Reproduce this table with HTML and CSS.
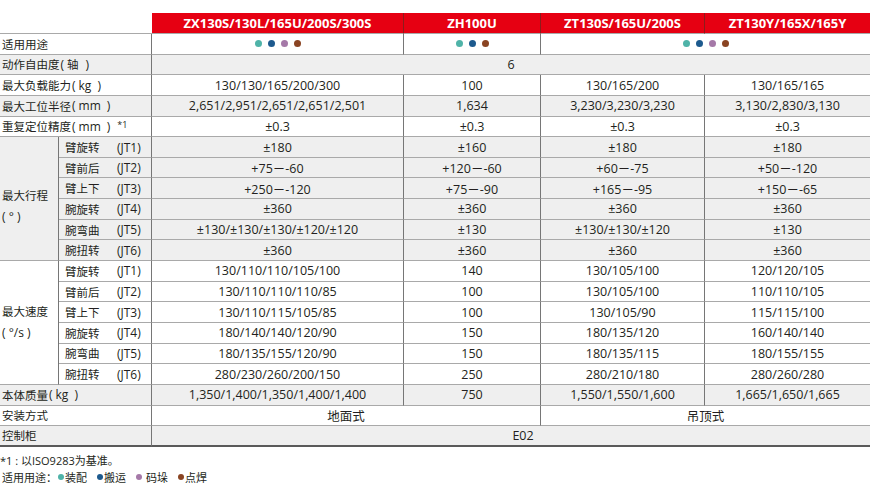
FILE: index.html
```html
<!DOCTYPE html>
<html lang="zh-CN">
<head>
<meta charset="utf-8">
<title>规格</title>
<link rel="stylesheet" href="styles.css">
</head>
<body>
<div class="page">
  <div class="spec">
    <div class="c blank span2"></div>
    <div class="c hd">ZX130S/130L/165U/200S/300S</div>
    <div class="c hd">ZH100U</div>
    <div class="c hd">ZT130S/165U/200S</div>
    <div class="c hd last">ZT130Y/165X/165Y</div>

    <div class="c lbl span2">适用用途</div>
    <div class="c v"><span class="dots"><i class="d1"></i><i class="d2"></i><i class="d3"></i><i class="d4"></i></span></div>
    <div class="c v"><span class="dots"><i class="d1"></i><i class="d2"></i><i class="d4"></i></span></div>
    <div class="c v span2 last"><span class="dots"><i class="d1"></i><i class="d2"></i><i class="d3"></i><i class="d4"></i></span></div>

    <div class="c lbl span2 g">动作自由度<span class="p">(<span class="u cj">轴</span>)</span></div>
    <div class="c v span4 last g">6</div>

    <div class="c lbl span2">最大负载能力<span class="p">(<span class="u">kg</span>)</span></div>
    <div class="c v">130/130/165/200/300</div>
    <div class="c v">100</div>
    <div class="c v">130/165/200</div>
    <div class="c v last">130/165/165</div>

    <div class="c lbl span2 g">最大工位半径<span class="p">(<span class="u">mm</span>)</span></div>
    <div class="c v g">2,651/2,951/2,651/2,651/2,501</div>
    <div class="c v g">1,634</div>
    <div class="c v g">3,230/3,230/3,230</div>
    <div class="c v last g">3,130/2,830/3,130</div>

    <div class="c lbl span2">重复定位精度<span class="p">(<span class="u">mm</span>)</span><sup>*1</sup></div>
    <div class="c v">±0.3</div>
    <div class="c v">±0.3</div>
    <div class="c v">±0.3</div>
    <div class="c v last">±0.3</div>

    <div class="c lbl grp travel g"><span>最大行程<br><span class="q">( ° )</span></span></div>
    <div class="c sub g"><span class="nm">臂旋转</span><span class="jt">(JT1)</span></div>
    <div class="c v g">±180</div>
    <div class="c v g">±160</div>
    <div class="c v g">±180</div>
    <div class="c v last g">±180</div>

    <div class="c sub g"><span class="nm">臂前后</span><span class="jt">(JT2)</span></div>
    <div class="c v g">+75－-60</div>
    <div class="c v g">+120－-60</div>
    <div class="c v g">+60－-75</div>
    <div class="c v last g">+50－-120</div>

    <div class="c sub g"><span class="nm">臂上下</span><span class="jt">(JT3)</span></div>
    <div class="c v g">+250－-120</div>
    <div class="c v g">+75－-90</div>
    <div class="c v g">+165－-95</div>
    <div class="c v last g">+150－-65</div>

    <div class="c sub g"><span class="nm">腕旋转</span><span class="jt">(JT4)</span></div>
    <div class="c v g">±360</div>
    <div class="c v g">±360</div>
    <div class="c v g">±360</div>
    <div class="c v last g">±360</div>

    <div class="c sub g"><span class="nm">腕弯曲</span><span class="jt">(JT5)</span></div>
    <div class="c v g">±130/±130/±130/±120/±120</div>
    <div class="c v g">±130</div>
    <div class="c v g">±130/±130/±120</div>
    <div class="c v last g">±130</div>

    <div class="c sub g"><span class="nm">腕扭转</span><span class="jt">(JT6)</span></div>
    <div class="c v g">±360</div>
    <div class="c v g">±360</div>
    <div class="c v g">±360</div>
    <div class="c v last g">±360</div>

    <div class="c lbl grp speed"><span>最大速度<br><span class="q">( °/s )</span></span></div>
    <div class="c sub"><span class="nm">臂旋转</span><span class="jt">(JT1)</span></div>
    <div class="c v">130/110/110/105/100</div>
    <div class="c v">140</div>
    <div class="c v">130/105/100</div>
    <div class="c v last">120/120/105</div>

    <div class="c sub"><span class="nm">臂前后</span><span class="jt">(JT2)</span></div>
    <div class="c v">130/110/110/110/85</div>
    <div class="c v">100</div>
    <div class="c v">130/105/100</div>
    <div class="c v last">110/110/105</div>

    <div class="c sub"><span class="nm">臂上下</span><span class="jt">(JT3)</span></div>
    <div class="c v">130/110/115/105/85</div>
    <div class="c v">100</div>
    <div class="c v">130/105/90</div>
    <div class="c v last">115/115/100</div>

    <div class="c sub"><span class="nm">腕旋转</span><span class="jt">(JT4)</span></div>
    <div class="c v">180/140/140/120/90</div>
    <div class="c v">150</div>
    <div class="c v">180/135/120</div>
    <div class="c v last">160/140/140</div>

    <div class="c sub"><span class="nm">腕弯曲</span><span class="jt">(JT5)</span></div>
    <div class="c v">180/135/155/120/90</div>
    <div class="c v">150</div>
    <div class="c v">180/135/115</div>
    <div class="c v last">180/155/155</div>

    <div class="c sub"><span class="nm">腕扭转</span><span class="jt">(JT6)</span></div>
    <div class="c v">280/230/260/200/150</div>
    <div class="c v">250</div>
    <div class="c v">280/210/180</div>
    <div class="c v last">280/260/280</div>

    <div class="c lbl span2 g">本体质量<span class="p">(<span class="u">kg</span>)</span></div>
    <div class="c v g">1,350/1,400/1,350/1,400/1,400</div>
    <div class="c v g">750</div>
    <div class="c v g">1,550/1,550/1,600</div>
    <div class="c v last g">1,665/1,650/1,665</div>

    <div class="c lbl span2">安装方式</div>
    <div class="c v span2">地面式</div>
    <div class="c v span2 last">吊顶式</div>

    <div class="c lbl span2 g end">控制柜</div>
    <div class="c v span4 last g end e02">E02</div>
  </div>

  <div class="notes">
    <p class="note">*1 : 以ISO9283为基准。</p>
    <p class="legend"><span class="lg">适用用途：</span><span class="it"><i class="d1"></i>装配</span><span class="it"><i class="d2"></i>搬运</span><span class="it w"><i class="d3"></i>码垛</span><span class="it"><i class="d4"></i>点焊</span></p>
  </div>
</div>
</body>
</html>
```

FILE: styles.css
```css
html, body {
  margin: 0;
  padding: 0;
  background: #fff;
}

.page {
  width: 870px;
  padding-top: 13px;
  font-family: "Open Sans", "Noto Sans CJK SC", sans-serif;
  color: #231f20;
}

.spec {
  display: grid;
  grid-template-columns: 59px 93px 252px 137px 164px 165px;
  grid-template-rows: 21px repeat(20, 20.65px);
}

.c {
  box-sizing: border-box;
  border-bottom: 1px solid #a9a9a9;
  border-right: 1px solid #767676;
  display: flex;
  align-items: center;
  font-size: 12.5px;
  white-space: pre;
  overflow: hidden;
}

.c.last {
  border-right: none;
}

.span2 { grid-column: span 2; }
.span4 { grid-column: span 4; }

.g { background: #efefef; }

.blank {
  border-right: none;
}

.hd {
  background: #e60012;
  color: #fff;
  font-weight: 700;
  font-size: 13px;
  justify-content: center;
  border-right: 1px solid #8c1c1c;
  border-bottom-color: #a9a9a9;
}

.lbl {
  font-family: "Noto Sans CJK SC", sans-serif;
  font-size: 11.5px;
  padding-left: 2px;
}

.lbl .p {
  font-family: "Open Sans", sans-serif;
  font-size: 12px;
  margin-left: 1px;
}

.lbl .p .u {
  padding: 0 6px 0 3px;
}

.lbl .p .cj {
  font-family: "Noto Sans CJK SC", sans-serif;
  font-size: 11.5px;
  padding: 0 7px 0 3px;
}

.lbl .q {
  font-family: "Open Sans", sans-serif;
  font-size: 12px;
}

.lbl sup {
  font-family: "Open Sans", sans-serif;
  font-size: 9px;
  align-self: flex-start;
  margin-top: 1px;
  margin-left: 7px;
}

.grp {
  grid-row: span 6;
  line-height: 21px;
}

.grp > span {
  display: block;
}

.travel > span {
  margin-top: 14px;
}

.sub {
  padding-left: 6px;
  font-size: 12px;
}

.sub .nm {
  font-family: "Noto Sans CJK SC", sans-serif;
  font-size: 11.5px;
  width: 52px;
}

.sub .jt {
  font-size: 12px;
}

.v {
  justify-content: center;
}

.end {
  border-bottom: 2px solid #5a5a5a;
}

.e02 {
  padding-left: 24px;
}

.dots {
  display: flex;
  gap: 6px;
}

.dots i,
.legend i {
  display: block;
  width: 7px;
  height: 7px;
  border-radius: 50%;
}

.d1 { background: #4fb3a8; }
.d2 { background: #1d5a8e; }
.d3 { background: #a579a8; }
.d4 { background: #8a4422; }

.notes {
  margin-top: 6px;
  font-family: "Noto Sans CJK SC", sans-serif;
  font-size: 11px;
  line-height: 16px;
}

.notes p {
  margin: 0;
}

.note {
  white-space: pre;
  font-family: "Open Sans", "Noto Sans CJK SC", sans-serif;
}

.legend {
  display: flex;
  align-items: center;
  padding-left: 2px;
}

.legend .lg {
  width: 56px;
}

.legend .it {
  display: flex;
  align-items: center;
  margin-right: 10px;
}

.legend .it.w i {
  margin-right: 4px;
}

.legend i {
  width: 6px;
  height: 6px;
  margin-right: 1px;
}
```
